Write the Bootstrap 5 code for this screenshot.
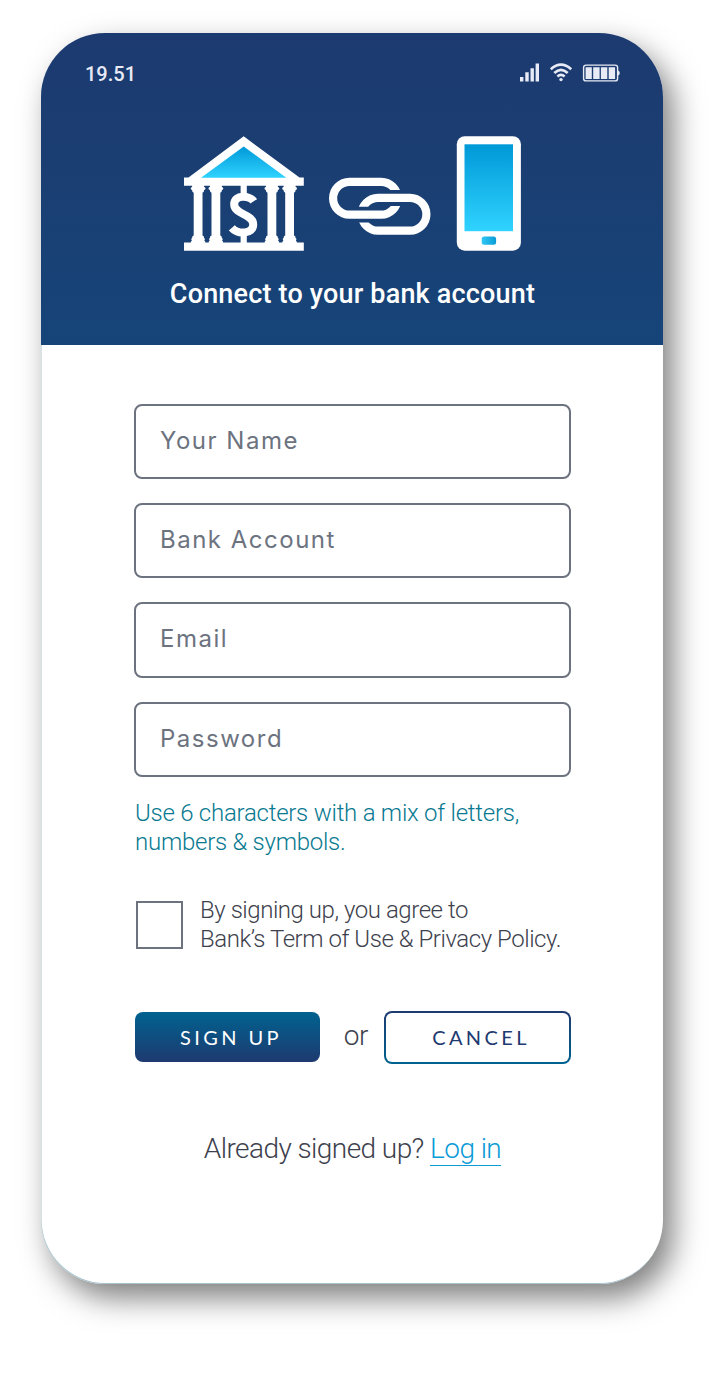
<!DOCTYPE html>
<html lang="en">
<head>
<meta charset="utf-8">
<meta name="viewport" content="width=device-width, initial-scale=1">
<title>Connect to your bank account</title>
<link href="https://cdn.jsdelivr.net/npm/bootstrap@5.3.0/dist/css/bootstrap.min.css" rel="stylesheet">
<style>
  body { font-family: Roboto, sans-serif; background: #fff; color: #3d414d; min-height: 1386px; padding: 33px 63px 0 41px; }
  .phone { height: 1251px; border-radius: 64px; background: #fff; box-shadow: 10px 14px 30px rgba(0,0,0,.5), inset .5px -1px 0 #a9c3ce; }
  .hero { height: 312px; border-radius: 64px 64px 0 0; background: linear-gradient(#1c3a70, #1b3e72 40%, #164479); color: #fff; }
  .status { padding: 28px 43px 0 44px; height: 53px; color: #e8ebf5; }
  .clock { font-size: 20px; line-height: 26px; letter-spacing: 0; font-weight: 500; }
  .art { padding: 50px 0 0 143px; height: 168px; }
  .headline { font-size: 27px; line-height: 32px; font-weight: 500; letter-spacing: .18px; margin-top: 24px; padding-left: 1px; }
  .panel { padding: 59px 92px 0 93px; }
  .fields { gap: 24px; }
  .fields .form-control { height: 75.2px; border: 2px solid #6c737f; border-radius: 8px; padding: 0 24px 2px; font: 400 24px/30px Inter, sans-serif; letter-spacing: 1.5px; }
  .fields .form-control::placeholder { color: #6c737f; opacity: 1; }
  .hint { color: #087990; font-weight: 300; font-size: 24px; line-height: 29px; letter-spacing: -.25px; margin: 22px 0 0 1px; }
  .agree { margin: 39px 0 0 2px; gap: 17px; }
  .agree .form-check-input { width: 47px; height: 48px; border: 2px solid #6c737f; border-radius: 0; margin: 5px 0 0; }
  .agree label { font-weight: 300; font-size: 24px; line-height: 29px; letter-spacing: -.45px; white-space: nowrap; }
  .actions { margin-top: 57px; height: 53px; }
  .pill { font: 400 20px/26px Lato, sans-serif; letter-spacing: 3.4px; border-radius: 8px; padding: 0; }
  .pill-solid { width: 185px; height: 50px; color: #fff; border: 0; background: linear-gradient(#00628f, #1e3a70); margin-left: 1px; padding-left: 7px; }
  .pill-line { width: 187px; height: 53px; color: #1e3a70; border: 2px solid transparent; padding-left: 7px; background: linear-gradient(#fff, #fff) padding-box, linear-gradient(#1e3a70, #00628f) border-box; }
  .or { font-weight: 300; font-size: 28px; line-height: 30px; letter-spacing: -.4px; padding: 0 0 2px 8px; }
  .signed { font-weight: 300; font-size: 28px; line-height: 32px; letter-spacing: -.56px; margin: 69px 0 0; white-space: nowrap; }
  .signed a { color: #0a9bd6; text-decoration: none; border-bottom: 1px solid #0a9bd6; }
</style>
</head>
<body>
<main class="phone">
  <header class="hero">
    <div class="status d-flex justify-content-between align-items-start">
      <span class="clock">19.51</span>
      <svg width="101" height="22" viewBox="519 61 101 22" fill="#e8ebf5">
        <path d="M520 77h3.400v4.400H520zM525.300 72.300h3.400v9.100h-3.400zM530.500 68.200h3.400v13.200h-3.400zM535.600 63.500h3.400v17.900h-3.400z"/>
        <g fill="none" stroke="#e8ebf5" stroke-width="2.700"><path d="M550.800 69.200Q561 60 571.200 69.200"/><path d="M554.300 73Q561 66.600 567.700 73"/><path d="M557.400 76.500Q561 73.200 564.600 76.500"/></g>
        <circle cx="561" cy="79.600" r="1.700"/>
        <rect x="583.600" y="65.100" width="34" height="15.800" rx="2.500" fill="none" stroke="#e8ebf5" stroke-width="1.400"/>
        <path d="M585.600 67.200h6.200v11.800h-6.200zM593.200 67.200h6.400v11.800h-6.400zM600.900 67.200h6.400v11.800h-6.400zM608.700 67.200h6.400v11.800h-6.400zM618 70.500q1.800.5 1.800 2.500t-1.800 2.500z"/>
      </svg>
    </div>
    <div class="art">
      <svg class="d-block" width="338" height="116" viewBox="184 136 338 116">
        <defs>
          <linearGradient id="sky" x2="0" y2="1"><stop stop-color="#0099d8"/><stop offset="1" stop-color="#30d3ff"/></linearGradient>
          <linearGradient id="key"><stop stop-color="#30c8f5"/><stop offset="1" stop-color="#0a9bd6"/></linearGradient>
          <path id="column" d="M-6 184.500H6V187q1.400.2 1.400 1.500t-1.400 1.600q.2 2-1.600 2.600V235.500q1.700.4 1.600 2.400.8.300.8 1.200t-.6 1.300q1.200.6 1.200 3.100H-7.400q0-2.500 1.200-3.100-.6-.4-.6-1.300t.8-1.200q-.1-2 1.600-2.400V192.700q-1.800-.6-1.600-2.600-1.400-.3-1.400-1.600T-6 187z"/>
          <clipPath id="linkA"><path d="M325 170H410V190H370V206H410V225H325z"/></clipPath>
          <clipPath id="linkB"><path d="M355 190H435V240H355V222.500H390V206.700H355z"/></clipPath>
        </defs>
        <g fill="#fff">
          <path d="M243.700 136.300L299.500 177.500H303.800V185.700H183.700V177.500H188.500z"/>
          <path d="M183.700 242.500h120.100v8.200H183.700z"/>
          <use href="#column" x="198.100"/><use href="#column" x="215.900"/><use href="#column" x="271.900"/><use href="#column" x="289.600"/>
          <path d="M240.600 185h6.200v10h-6.200zM240.600 234h6.200v9h-6.200z"/>
        </g>
        <path d="M243.700 146.500L286.300 177.800H201z" fill="url(#sky)"/>
        <path d="M253.700 201.300C250 195.500 234.200 194 234.200 204.200C234.200 215 253.200 213.500 253.200 224.500C253.200 234.500 237.800 234.500 231.800 227.800" fill="none" stroke="#fff" stroke-width="8"/>
        <g fill="none" stroke="#fff" stroke-width="8.200">
          <rect x="333.100" y="181.800" width="64.500" height="32.800" rx="16.400" clip-path="url(#linkA)"/>
          <rect x="361.600" y="197.900" width="64.800" height="32.800" rx="16.400" clip-path="url(#linkB)"/>
        </g>
        <rect x="456.800" y="136.200" width="64.100" height="114.500" rx="8" fill="#fff"/>
        <rect x="464.500" y="144.300" width="48.500" height="86.900" fill="url(#sky)"/>
        <rect x="481.700" y="236.500" width="14.400" height="8.300" rx="2.500" fill="url(#key)"/>
      </svg>
    </div>
    <h1 class="headline text-center mb-0">Connect to your bank account</h1>
  </header>

  <form class="panel">
    <div class="fields d-flex flex-column">
      <input class="form-control" type="text" placeholder="Your Name" aria-label="Your Name">
      <input class="form-control" type="text" placeholder="Bank Account" aria-label="Bank Account">
      <input class="form-control" type="email" placeholder="Email" aria-label="Email">
      <input class="form-control" type="password" placeholder="Password" aria-label="Password">
    </div>
    <p class="hint">Use 6 characters with a mix of letters,<br>numbers &amp; symbols.</p>
    <div class="agree d-flex align-items-start">
      <input class="form-check-input flex-shrink-0" type="checkbox" id="terms">
      <label for="terms">By signing up, you agree to<br>Bank’s Term of Use &amp; Privacy Policy.</label>
    </div>
    <div class="actions d-flex align-items-center justify-content-between">
      <button class="btn pill pill-solid" type="button">SIGN UP</button>
      <span class="or">or</span>
      <button class="btn pill pill-line" type="button">CANCEL</button>
    </div>
    <p class="signed text-center">Already signed up? <a href="#">Log in</a></p>
  </form>
</main>
<script src="https://cdn.jsdelivr.net/npm/bootstrap@5.3.0/dist/js/bootstrap.bundle.min.js"></script>
</body>
</html>
